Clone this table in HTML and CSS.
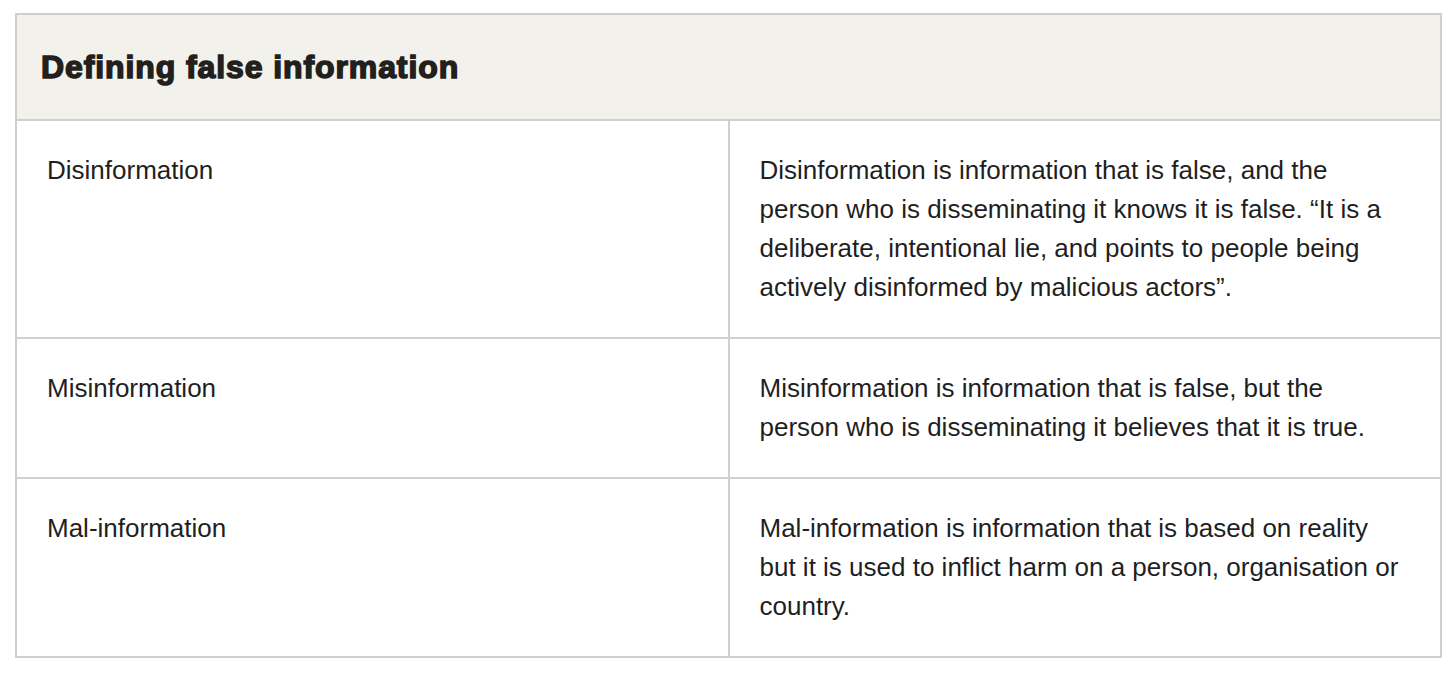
FILE: index.html
```html
<!DOCTYPE html>
<html>
<head>
<meta charset="utf-8">
<link rel="stylesheet" href="styles.css">
</head>
<body>
<div class="wrap">
  <table class="def">
    <thead>
      <tr><th colspan="2" class="head">Defining false information</th></tr>
    </thead>
    <tbody>
      <tr>
        <td class="term">Disinformation</td>
        <td class="desc">Disinformation is information that is false, and the person who is disseminating it knows it is false. “It is a deliberate, intentional lie, and points to people being actively disinformed by malicious actors”.</td>
      </tr>
      <tr>
        <td class="term">Misinformation</td>
        <td class="desc">Misinformation is information that is false, but the person who is disseminating it believes that it is true.</td>
      </tr>
      <tr>
        <td class="term">Mal-information</td>
        <td class="desc">Mal-information is information that is based on reality but it is used to inflict harm on a person, organisation or country.</td>
      </tr>
    </tbody>
  </table>
</div>
</body>
</html>
```
FILE: styles.css
```css
html, body {
  margin: 0;
  padding: 0;
  background: #ffffff;
}
.wrap {
  padding: 13px 14px 0 15px;
}
.def {
  width: 1427px;
  border-collapse: collapse;
  table-layout: fixed;
  font-family: "Liberation Sans", Arial, sans-serif;
  color: #1f1f1f;
}
.def th, .def td {
  border: 2px solid #cfcfcf;
}
.head {
  background: #f2f1eb;
  text-align: left;
  height: 106px;
  padding: 0 0 0 24px;
  font-size: 32px;
  font-weight: 900;
  color: #221f1c;
  -webkit-text-stroke: 1.5px #221f1c;
  letter-spacing: 0.9px;
  box-sizing: border-box;
}
.term, .desc {
  vertical-align: top;
  font-size: 26px;
  line-height: 39px;
  padding: 30px 30px;
}
.desc {
  padding-right: 35px;
}
.term {
  width: 712px;
}
```
